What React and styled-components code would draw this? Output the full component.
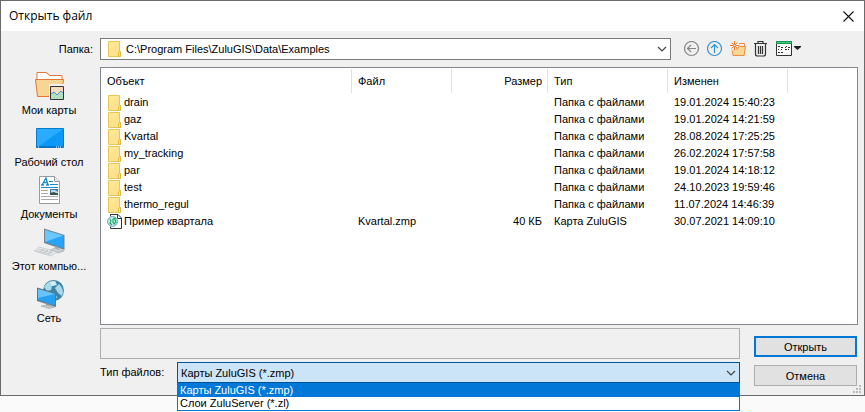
import React from "react";
import styled, { createGlobalStyle } from "styled-components";

const GlobalStyle = createGlobalStyle`
  * { box-sizing: border-box; }
  body {
    margin: 0;
    background: #fafafa;
    color: #000;
    font: 11px/16px "Liberation Sans", Arial, sans-serif;
  }
  button, select, input, table { font: inherit; color: inherit; }
`;

const Page = styled.div`
  min-height: 100vh;
  padding-bottom: 16px;
  display: flex;
  flex-direction: column;
`;

const Dialog = styled.main`
  flex: 1;
  display: flex;
  flex-direction: column;
  background: #f0f0f0;
  border: 1px solid #6b6b6b;
`;

const TitleBar = styled.header`
  display: flex;
  align-items: center;
  justify-content: space-between;
  height: 30px;
  padding: 0 10px 0 8px;
  background: #fff;
`;

const Title = styled.h1`
  margin: 0;
  font: 400 12px/16px "Open Sans", "Noto Sans", sans-serif;
`;

const IconButton = styled.button`
  display: flex;
  align-items: center;
  padding: 0;
  border: 0;
  background: transparent;
`;

const Content = styled.div`
  flex: 1;
  display: grid;
  grid-template-columns: 92px minmax(0, 1fr);
  grid-template-rows: auto 1fr auto;
  column-gap: 7px;
  padding: 7px 6px 9px 0;
`;

const FieldLabel = styled.label`
  line-height: ${(p) => p.$line || 22}px;
  text-align: ${(p) => p.$align || "left"};
`;

const PathRow = styled.div`
  display: flex;
  align-items: center;
  gap: 13px;
`;

const Combo = styled.div`
  position: relative;
  flex: 1;
  min-width: 0;
`;

const Select = styled.select`
  display: block;
  width: 100%;
  height: ${(p) => (p.$open ? 21 : 22)}px;
  padding: 0 20px 0 ${(p) => (p.$icon ? 25 : 3)}px;
  appearance: none;
  border: 1px solid ${(p) => (p.$open ? "#005499" : "#7a7a7a")};
  border-radius: 0;
  background: ${(p) => (p.$open ? "#cce4f7" : "#fff")};
  outline: 0;
`;

const ComboIcon = styled.span`
  position: absolute;
  top: 3px;
  left: 7px;
  display: flex;
  pointer-events: none;
`;

const ComboArrow = styled.span`
  position: absolute;
  top: 0;
  bottom: 0;
  right: 4px;
  display: flex;
  align-items: center;
  pointer-events: none;
`;

const Options = styled.ul`
  position: absolute;
  z-index: 1;
  top: 100%;
  left: 0;
  right: 0;
  margin: 0;
  padding: 0;
  list-style: none;
  border: solid #0078d7;
  border-width: 1px 1px 1px;
  background: #fff;
`;

const Option = styled.li`
  padding: 0 2px;
  line-height: 13px;
  color: ${(p) => (p.$selected ? "#fff" : "#000")};
  background: ${(p) => (p.$selected ? "#0078d7" : "#fff")};
`;

const Toolbar = styled.div`
  display: flex;
  align-items: center;
  gap: 7px;
  padding-right: 57px;
`;

const Places = styled.nav`
  grid-row: 2 / 4;
  display: flex;
  flex-direction: column;
  gap: 2px;
  padding-top: 10px;
`;

const Place = styled.button`
  display: flex;
  flex-direction: column;
  align-items: center;
  width: 96px;
  height: 50px;
  padding: 0;
  border: 0;
  background: transparent;
  white-space: nowrap;
`;

const FileList = styled.section`
  margin-top: 7px;
  border: 1px solid #828790;
  background: #fff;
`;

const Table = styled.table`
  width: 100%;
  table-layout: fixed;
  border-collapse: collapse;
`;

const Col = styled.col`
  width: ${(p) => p.$width};
`;

const HeadCell = styled.th`
  height: 26px;
  padding: 0 6px;
  font-weight: 400;
  text-align: ${(p) => p.$align || "left"};
  background: ${(p) =>
    p.$last
      ? "none"
      : "linear-gradient(#e2e2e2, #e2e2e2) right 1px / 1px 24px no-repeat"};
`;

const Cell = styled.td`
  height: 17px;
  padding: 0 6px;
  line-height: 17px;
  white-space: nowrap;
  text-align: ${(p) => p.$align || "left"};
`;

const FileName = styled.span`
  display: flex;
  align-items: center;
  height: 17px;
  gap: 1px;
`;

const Footer = styled.div`
  grid-column: 2;
  display: grid;
  grid-template-columns: minmax(0, 1fr) 103px;
  column-gap: 14px;
  margin-top: 3px;
  padding-right: 1px;
`;

const Fields = styled.div`
  display: flex;
  flex-direction: column;
  gap: 3px;
`;

const NameInput = styled.input`
  width: 100%;
  height: 31px;
  border: 1px solid #adadad;
  background: #f0f0f0;
`;

const TypeRow = styled.div`
  display: grid;
  grid-template-columns: 77px minmax(0, 1fr);
  height: 21px;
`;

const Actions = styled.div`
  display: flex;
  flex-direction: column;
  gap: 8px;
  padding-top: 8px;
`;

const ActionButton = styled.button`
  height: 21px;
  padding: 0;
  border: ${(p) => (p.$primary ? "2px solid #0078d7" : "1px solid #adadad")};
  background: #e1e1e1;
`;

const Grip = styled.svg`
  position: absolute;
  right: 3px;
  bottom: 2px;
`;

const GripAnchor = styled.div`
  position: relative;
`;

const Chevron = () => (
  <svg width="10" height="10" fill="none" stroke="#444" strokeWidth="1.2" aria-hidden="true">
    <path d="M1 3l4 4 4-4" />
  </svg>
);

const FolderIcon = () => (
  <svg width="16" height="16" aria-hidden="true">
    <path d="M1.5 .5h11v10h1v5h-12z" fill="#ffe896" stroke="#e9c653" />
    <path d="M2 9l10-8v10l-1 4H2z" fill="#ffe08a" opacity=".7" />
    <path d="M11.5 15.5v-3.5l1-1.5h1v5z" fill="#ffe896" stroke="#e3bb3c" />
  </svg>
);

const MapFileIcon = () => (
  <svg width="16" height="16" fill="none" aria-hidden="true">
    <path d="M3.500 .5h7.500l3.500 3.500v10.500H3.500z" fill="#fff" stroke="#333" />
    <path d="M10.500 .5v4h4" stroke="#333" />
    <circle cx="5.500" cy="7.500" r="5.500" fill="#fff" />
    <circle cx="5.500" cy="7.500" r="4.900" fill="#d5f0f3" stroke="#4ba2bd" />
    <path d="M3 5l1 2-1 2 2 2M6 5l2-1v2l1 2-2 2-1-2z" stroke="#20b068" strokeWidth="1.300" />
  </svg>
);

const CloseIcon = () => (
  <svg width="11" height="11" stroke="#111" strokeWidth="1.100" aria-hidden="true">
    <path d="M.5 .5l10 10M10.500 .5l-10 10" />
  </svg>
);

const BackIcon = () => (
  <svg width="16" height="16" fill="none" stroke="#858585" strokeWidth="1.200" aria-hidden="true">
    <circle cx="7.500" cy="7.500" r="7" />
    <path d="M12 7.500H3.500M7 4L3.500 7.500 7 11" />
  </svg>
);

const UpIcon = () => (
  <svg width="16" height="16" fill="none" stroke="#3495d1" strokeWidth="1.200" aria-hidden="true">
    <circle cx="7.500" cy="7.500" r="7" />
    <path d="M7.500 12V3.500M4 7l3.500-3.500L11 7" />
  </svg>
);

const NewFolderIcon = () => (
  <svg width="17" height="16" fill="none" aria-hidden="true">
    <path d="M3.500 14.500L2 8h5l1.500-2.500h7l-1 9z" fill="#f6d794" />
    <path d="M2 9.500l1 5h11l1.500-9H9L7.500 8H6M9 2.500h5.500v3" stroke="#ee8b3e" />
    <path d="M4.500 0v9M0 4.500h9M1.500 1.500l6 6M7.500 1.500l-6 6" stroke="#ed7d2b" strokeWidth="1" />
    <circle cx="4.500" cy="4.500" r="1.300" fill="#f0f0f0" stroke="#ed7d2b" />
  </svg>
);

const TrashIcon = () => (
  <svg width="13" height="16" fill="none" stroke="#333" strokeWidth="1.200" aria-hidden="true">
    <path d="M0 2.500h13M4 2.500v-2h5v2M1.500 2.500V13q0 2 2 2h6q2 0 2-2V2.500M4.500 5v8M6.500 5v8M8.500 5v8" />
  </svg>
);

const ViewIcon = () => (
  <svg width="27" height="16" viewBox="-2 0 27 16" aria-hidden="true">
    <path d="M.5 .5h15v14H.5z" fill="#f8f8f8" stroke="#333" />
    <path d="M0 0h16v3H0z" fill="#149954" />
    <path d="M1 1h14v1H1z" fill="#4fc17d" />
    <path d="M2 5h2v1H2zM5 6h2v1H5zM9 6h1v1H9zM10 5h1v1h-1zM12 6h2v1h-2zM2 8h1v1H2zM5 8h1v1H5zM9 8h2v1H9zM12 8h1v1h-1zM2 11h2v1H2zM5 11h2v1H5z" fill="#333" />
    <path d="M18 5h7v1l-3.500 3L18 6z" fill="#222" />
  </svg>
);

const MapsIcon = () => (
  <svg width="32" height="32" fill="none" aria-hidden="true">
    <path d="M4 10V2.500h9l4 3h12V10" fill="#fff" stroke="#e6752d" />
    <path d="M2.500 9.500h28l-2 17h-24z" fill="#f6d692" stroke="#e6752d" />
    <path d="M16 14h16v18H16z" fill="#f0f0f0" />
    <path d="M17.500 16.500h13v13h-13z" fill="#f9dcc0" stroke="#333" />
    <path d="M18 24l3-2 3 3 3-3 3 1v6H18z" fill="#b2dfc0" />
    <path d="M18 24l3-2 3 3 4-4 2 2" stroke="#4696d2" />
  </svg>
);

const DesktopIcon = () => (
  <svg width="32" height="32" aria-hidden="true">
    <path d="M3.500 6.500h27v19h-27z" fill="#0d98f8" stroke="#087bc8" />
    <path d="M4 7h26L6 24H4z" fill="#29acff" />
    <path d="M4 24h26v2H4z" fill="#0875c5" />
    <path d="M5 25h1M23 25h1M25 25h1M27 25h1" stroke="#fff" />
  </svg>
);

const DocumentsIcon = () => (
  <svg width="32" height="32" fill="none" aria-hidden="true">
    <path d="M6.500 2.500h15l5 5v22h-20z" fill="#fff" stroke="#9a9a9a" />
    <path d="M21.500 2.500v5h5" fill="#eee" stroke="#9a9a9a" />
    <path d="M9 11l4-7 2 7M10.500 8.500h4M8 11h3M13 11h3" stroke="#168dd2" strokeWidth="1.300" />
    <path d="M16 7.500h4M17 10.500h8M8 13.500h17" stroke="#168dd2" />
    <path d="M8 16.500h7M8 19.500h7M8 22.500h17M8 25.500h17" stroke="#aaa" />
    <path d="M17 15h8v6h-8z" fill="#477aa4" />
    <path d="M18 16h4l3 2v1h-7z" fill="#b9d9ed" />
    <path d="M17 19l4-1 4 2v1h-8z" fill="#33534b" />
  </svg>
);

const ComputerIcon = () => (
  <svg width="32" height="32" aria-hidden="true">
    <path d="M11 2.500l20.500 6.500v15l-20.500-7z" fill="#75838c" />
    <path d="M12 4l18 5.500v12.500L12 16z" fill="#27a4f8" />
    <path d="M12 4l18 5.500L12 16z" fill="#6ac6ff" />
    <path d="M22 20l4 1.500v4l-4-1z" fill="#a3afb5" />
    <path d="M17 24l5-2 9 3-6 2z" fill="#c8cfd2" stroke="#939da2" strokeWidth=".5" />
    <path d="M1 25l5-4 18 5-6 4z" fill="#eceeef" stroke="#b4b8ba" strokeWidth=".6" />
    <path d="M3 24.500l15 4M5 23l15 4M7 26l4-3M11 27l4-3M15 28l4-3" stroke="#b0b7bb" strokeWidth=".7" />
  </svg>
);

const NetworkIcon = () => (
  <svg width="32" height="32" aria-hidden="true">
    <circle cx="20.500" cy="12.500" r="10.500" fill="#3d85a8" />
    <path d="M11 9q3-6 9-6l3 3-4 2-1 4-4 1zM22 10l4-4q6 6 3 12l-4-3z" fill="#a9d9e7" />
    <path d="M17 4l5-1 2 4-5 1zM21 16l3 3-3 4z" fill="#d6edf1" />
    <path d="M4 9.500l19 5.500v14L4 23z" fill="#66757f" />
    <path d="M5 11l17 5v11.500L5 22z" fill="#27a0f2" />
    <path d="M5 11l17 5L5 20z" fill="#67c3fc" />
    <path d="M13 25l4 1.500v2.500h-4z" fill="#8f9a9f" />
    <path d="M8 28l6-1 8 2-6 1.500z" fill="#c3cacd" stroke="#8f999e" strokeWidth=".5" />
  </svg>
);

const places = [
  { label: "Мои карты", Icon: MapsIcon },
  { label: "Рабочий стол", Icon: DesktopIcon },
  { label: "Документы", Icon: DocumentsIcon },
  { label: "Этот компью...", Icon: ComputerIcon },
  { label: "Сеть", Icon: NetworkIcon },
];

const files = [
  ["drain", "19.01.2024 15:40:23"],
  ["gaz", "19.01.2024 14:21:59"],
  ["Kvartal", "28.08.2024 17:25:25"],
  ["my_tracking", "26.02.2024 17:57:58"],
  ["par", "19.01.2024 14:18:12"],
  ["test", "24.10.2023 19:59:46"],
  ["thermo_regul", "11.07.2024 14:46:39"],
].map(([name, changed]) => ({ name, changed, type: "Папка с файлами", Icon: FolderIcon }));

files.push({
  name: "Пример квартала",
  file: "Kvartal.zmp",
  size: "40 КБ",
  type: "Карта ZuluGIS",
  changed: "30.07.2021 14:09:10",
  Icon: MapFileIcon,
});

const types = ["Карты ZuluGIS (*.zmp)", "Слои ZuluServer (*.zl)"];

const tools = [
  ["Назад", BackIcon],
  ["Вверх", UpIcon],
  ["Новая папка", NewFolderIcon],
  ["Удалить", TrashIcon],
  ["Вид", ViewIcon],
];

export default function App() {
  return (
    <Page>
      <GlobalStyle />
      <Dialog>
        <TitleBar>
          <Title>Открыть файл</Title>
          <IconButton aria-label="Закрыть">
            <CloseIcon />
          </IconButton>
        </TitleBar>
        <Content>
          <FieldLabel htmlFor="folder" $align="right">
            Папка:
          </FieldLabel>
          <PathRow>
            <Combo>
              <Select id="folder" $icon>
                <option>C:\Program Files\ZuluGIS\Data\Examples</option>
              </Select>
              <ComboIcon>
                <FolderIcon />
              </ComboIcon>
              <ComboArrow>
                <Chevron />
              </ComboArrow>
            </Combo>
            <Toolbar>
              {tools.map(([label, Icon]) => (
                <IconButton key={label} aria-label={label}>
                  <Icon />
                </IconButton>
              ))}
            </Toolbar>
          </PathRow>
          <Places>
            {places.map(({ label, Icon }) => (
              <Place key={label}>
                <Icon />
                {label}
              </Place>
            ))}
          </Places>
          <FileList>
            <Table>
              <colgroup>
                <Col $width="251px" />
                <Col $width="100px" />
                <Col $width="96px" />
                <Col $width="120px" />
                <Col $width="120px" />
                <Col $width="auto" />
              </colgroup>
              <thead>
                <tr>
                  <HeadCell>Объект</HeadCell>
                  <HeadCell>Файл</HeadCell>
                  <HeadCell $align="right">Размер</HeadCell>
                  <HeadCell>Тип</HeadCell>
                  <HeadCell>Изменен</HeadCell>
                  <HeadCell $last />
                </tr>
              </thead>
              <tbody>
                {files.map(({ name, file, size, type, changed, Icon }) => (
                  <tr key={name}>
                    <Cell>
                      <FileName>
                        <Icon />
                        {name}
                      </FileName>
                    </Cell>
                    <Cell>{file}</Cell>
                    <Cell $align="right">{size}</Cell>
                    <Cell>{type}</Cell>
                    <Cell>{changed}</Cell>
                    <Cell />
                  </tr>
                ))}
              </tbody>
            </Table>
          </FileList>
          <Footer>
            <Fields>
              <NameInput disabled aria-label="Имя файла" />
              <TypeRow>
                <FieldLabel htmlFor="type" $line={20}>
                  Тип файлов:
                </FieldLabel>
                <Combo>
                  <Select id="type" $open>
                    {types.map((t) => (
                      <option key={t}>{t}</option>
                    ))}
                  </Select>
                  <ComboArrow>
                    <Chevron />
                  </ComboArrow>
                  <Options role="listbox" aria-label="Тип файлов">
                    {types.map((t, i) => (
                      <Option key={t} role="option" aria-selected={i === 0} $selected={i === 0}>
                        {t}
                      </Option>
                    ))}
                  </Options>
                </Combo>
              </TypeRow>
            </Fields>
            <Actions>
              <ActionButton $primary>Открыть</ActionButton>
              <ActionButton>Отмена</ActionButton>
            </Actions>
          </Footer>
        </Content>
        <GripAnchor>
          <Grip width="8" height="8" aria-hidden="true">
            <path d="M6 0h2v2H6zM3 3h2v2H3zM6 3h2v2H6zM0 6h2v2H0zM3 6h2v2H3zM6 6h2v2H6z" fill="#bcbcbc" />
          </Grip>
        </GripAnchor>
      </Dialog>
    </Page>
  );
}
